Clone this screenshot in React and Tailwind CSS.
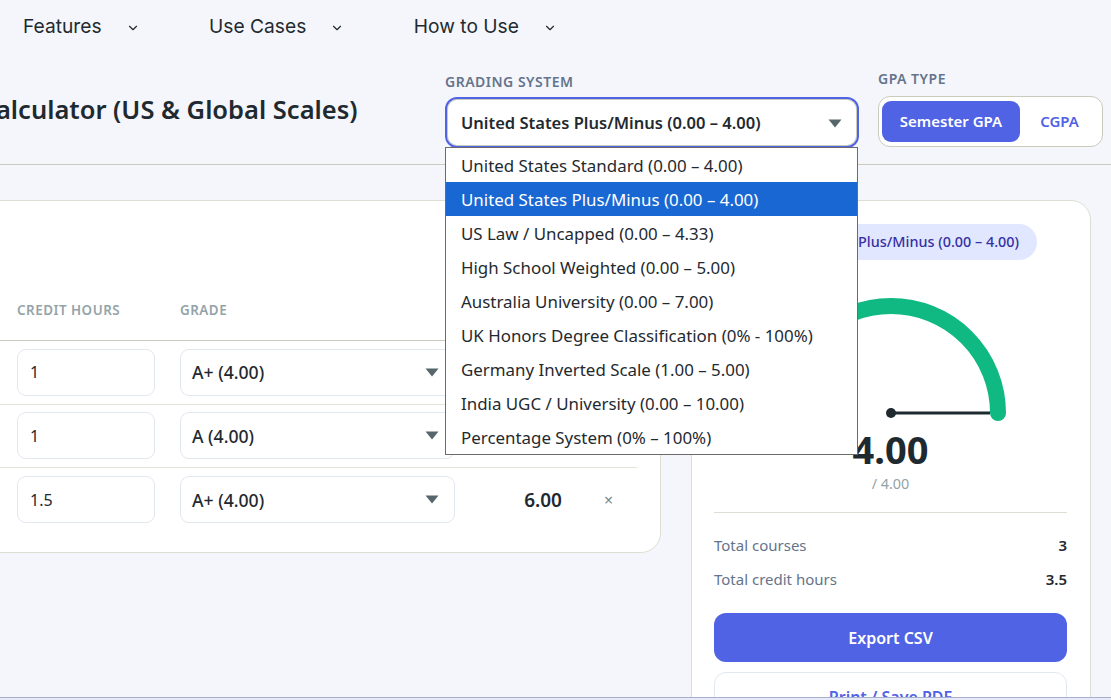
import React from "react";
import { ChevronDown } from "lucide-react";

const options = [
  "United States Standard (0.00 – 4.00)",
  "United States Plus/Minus (0.00 – 4.00)",
  "US Law / Uncapped (0.00 – 4.33)",
  "High School Weighted (0.00 – 5.00)",
  "Australia University (0.00 – 7.00)",
  "UK Honors Degree Classification (0% - 100%)",
  "Germany Inverted Scale (1.00 – 5.00)",
  "India UGC / University (0.00 – 10.00)",
  "Percentage System (0% – 100%)",
];

const rows = [
  { credit: "1", grade: "A+ (4.00)", points: "4.00" },
  { credit: "1", grade: "A (4.00)", points: "4.00" },
  { credit: "1.5", grade: "A+ (4.00)", points: "6.00" },
];

function Caret({ className }) {
  return (
    <svg width="14" height="9" viewBox="0 0 14 9" className={className}>
      <path d="M0.5 0.5H13.5L7 8.5Z" fill="#56676b" />
    </svg>
  );
}

function NavItem({ label }) {
  return (
    <div className="flex items-center gap-[24px] text-[19.2px] text-[#1f2a30]">
      <span>{label}</span>
      <ChevronDown size={14} strokeWidth={2} className="mt-[4px]" />
    </div>
  );
}

export default function App() {
  return (
    <div className="relative h-[700px] w-[1111px] overflow-hidden bg-[#f4f6fb] font-['Noto_Sans',sans-serif] text-[#1f2a30]">
      <nav className="flex h-[54px] items-center gap-[69.5px] pb-[2px] pl-[23px] font-['Inter',sans-serif]">
        <NavItem label="Features" />
        <NavItem label="Use Cases" />
        <NavItem label="How to Use" />
      </nav>

      <header className="flex h-[111px] items-start border-b border-[#c9cbbd]">
        <div className="mt-[36px] flex w-[445px] shrink-0 justify-start overflow-hidden">
          <h1 className="-ml-[77px] whitespace-nowrap text-[25.5px] font-semibold leading-[38px] text-[#1f2a30]">
            GPA Calculator (US &amp; Global Scales)
          </h1>
        </div>
        <div className="mt-[19px] w-[414px] shrink-0">
          <div className="h-[18px] text-[14px] font-semibold leading-[18px] tracking-[0.5px] text-[#64748b]">GRADING SYSTEM</div>
          <div className="mt-[6px] flex h-[51px] items-center justify-between rounded-[12px] border-2 border-[#5063e4] bg-white pl-[14px] pr-[15px] text-[16.5px] font-semibold shadow-[inset_0_0_0_1px_#c9cbbd]">
            <span className="mt-[2px]">United States Plus/Minus (0.00 – 4.00)</span>
            <Caret className="mt-[1px]" />
          </div>
        </div>
        <div className="ml-[19px] mt-[16px] w-[225px] shrink-0">
          <div className="h-[18px] text-[14px] font-semibold leading-[18px] tracking-[0.5px] text-[#64748b]">GPA TYPE</div>
          <div className="mt-[8px] flex h-[51px] items-center rounded-[12px] border border-[#c9cbbd] bg-white pl-[3px]">
            <div className="flex h-[41px] w-[138px] items-center justify-center rounded-[9px] bg-[#5063e4] text-[15px] font-semibold text-white">Semester GPA</div>
            <div className="flex-1 pr-[3px] text-center text-[15px] font-semibold text-[#5063e4]">CGPA</div>
          </div>
        </div>
      </header>

      <main className="flex items-start gap-[30px] pt-[35px]">
        <section className="-ml-[40px] h-[353px] w-[701px] shrink-0 rounded-[20px] border border-[#dedfd3] bg-white pr-[23px] pt-[99px]">
          <div className="flex h-[41px] items-start border-b border-[#c9cbbd] pl-[56px] pt-[1px] text-[13.4px] font-semibold leading-[18px] tracking-[0.5px] text-[#94a3a8]">
            <div className="w-[163px]">CREDIT HOURS</div>
            <div>GRADE</div>
          </div>
          {rows.map((r, i) => (
            <div key={i} className="flex h-[63.5px] items-center border-b border-[#e3e4da] pl-[56px] last:border-b-0">
              <div className="flex h-[47px] w-[138px] items-center rounded-[9px] border border-[#e2e8f0] pl-[12px] text-[16px]">{r.credit}</div>
              <div className="ml-[25px] flex h-[47px] w-[275px] items-center justify-between rounded-[9px] border border-[#e2e8f0] pl-[11px] pr-[15px] text-[17.6px] font-medium">
                <span>{r.grade}</span>
                <Caret />
              </div>
              <div className="w-[107px] text-right text-[19px] font-semibold">{r.points}</div>
              <div className="ml-[42px] text-[16px] leading-none text-[#7b8a90]">×</div>
            </div>
          ))}
        </section>

        <aside className="h-[600px] w-[400px] shrink-0 rounded-[20px] border border-[#dedfd3] bg-white pl-[22px] pr-[23px] pt-[23px]">
          <div className="flex justify-center">
            <div className="flex h-[36px] items-center rounded-full bg-[#e0e7ff] px-[18px] pb-[1px] text-[14.4px] font-medium text-[#3730a3]">
              United States Plus/Minus (0.00 – 4.00)
            </div>
          </div>
          <div className="mt-[38px] flex justify-center">
            <svg width="240" height="125" viewBox="0 0 240 125">
              <path d="M13 115 A107 107 0 0 1 227 115" fill="none" stroke="#10b981" strokeWidth="16" strokeLinecap="round" />
              <line x1="120" y1="115" x2="219" y2="115" stroke="#1f2a30" strokeWidth="3" />
              <circle cx="120" cy="115" r="5" fill="#1f2a30" />
            </svg>
          </div>
          <div className="text-center text-[38px] font-bold leading-[52px]">4.00</div>
          <div className="-mt-[1px] text-center text-[14.4px] leading-[20px] text-[#94a3a8]">/ 4.00</div>
          <div className="mt-[18px] border-t border-[#dedfd3] pt-[15px]">
            <div className="flex h-[34px] items-center justify-between text-[15px] text-[#64748b]">
              <span>Total courses</span>
              <span className="font-semibold text-[#1f2a30]">3</span>
            </div>
            <div className="flex h-[34px] items-center justify-between text-[15px] text-[#64748b]">
              <span>Total credit hours</span>
              <span className="font-semibold text-[#1f2a30]">3.5</span>
            </div>
          </div>
          <div className="mt-[17px] flex h-[49px] items-center justify-center rounded-[12px] bg-[#5063e4] text-[16px] font-semibold text-white">Export CSV</div>
          <div className="mt-[10px] flex h-[49px] items-center justify-center rounded-[12px] border border-[#e2e8f0] bg-white text-[16px] font-semibold text-[#5063e4]">Print / Save PDF</div>
        </aside>
      </main>

      <ul className="absolute left-[445px] top-[147px] w-[413px] border border-[#6b6b6b] bg-white text-[16.9px] text-[#1f2a30]">
        {options.map((o, i) => (
          <li key={o} className={"flex h-[34px] items-center pl-[15px] pt-[1px] " + (i === 1 ? "bg-[#1967d2] text-white" : "")}>{o}</li>
        ))}
      </ul>

      <div className="absolute bottom-0 left-0 h-[3px] w-full border-t border-[#a9b0cf] bg-[#e6e9f8]" />
    </div>
  );
}
